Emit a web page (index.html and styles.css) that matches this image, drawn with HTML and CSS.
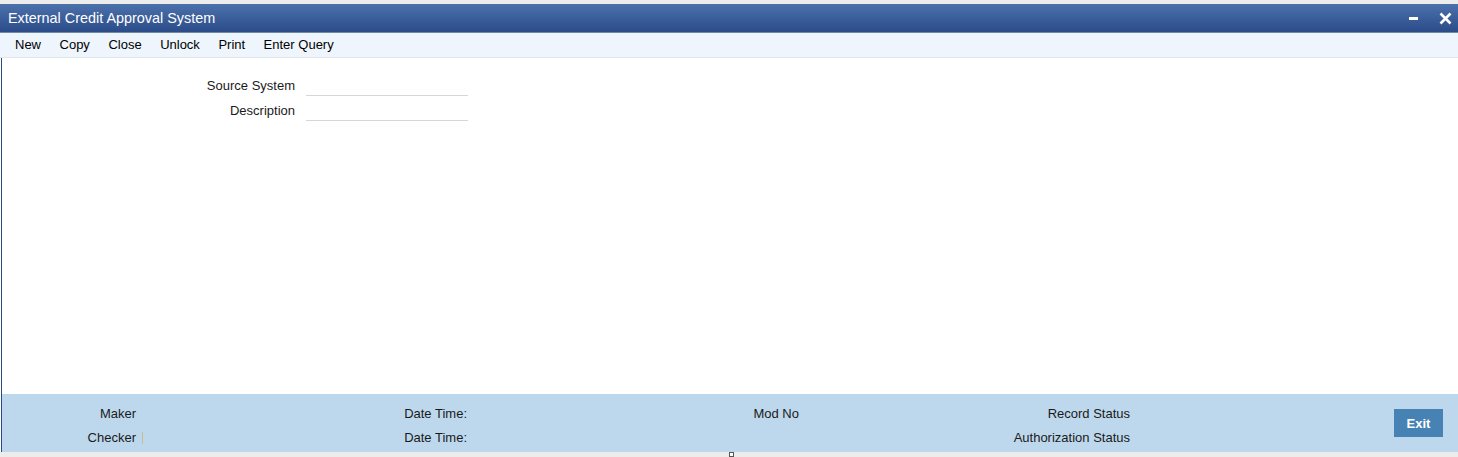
FILE: index.html
```html
<!DOCTYPE html>
<html>
<head>
<meta charset="utf-8">
<title>External Credit Approval System</title>
<link rel="stylesheet" href="styles.css">
</head>
<body>
<div class="window">
  <div class="titlebar">
    <span class="title">External Credit Approval System</span>
    <div class="controls">
      <span class="minimize"></span>
      <svg class="close" width="13" height="13" viewBox="0 0 13 13"><path d="M1.5 1.5 L11.5 11.5 M11.5 1.5 L1.5 11.5" stroke="#fff" stroke-width="2.6" fill="none"/></svg>
    </div>
  </div>
  <div class="toolbar">
    <span class="tool">New</span>
    <span class="tool">Copy</span>
    <span class="tool">Close</span>
    <span class="tool">Unlock</span>
    <span class="tool">Print</span>
    <span class="tool">Enter Query</span>
  </div>
  <div class="main">
    <div class="form">
      <label class="flabel">Source System</label>
      <div class="finput"></div>
      <label class="flabel">Description</label>
      <div class="finput"></div>
    </div>
  </div>
  <div class="footer">
    <div class="flab c1 r1">Maker</div>
    <div class="flab c2 r1">Date Time:</div>
    <div class="flab c3 r1">Mod No</div>
    <div class="flab c4 r1">Record Status</div>
    <div class="flab c1 r2">Checker</div>
    <div class="flab c2 r2 split"><span class="caret"></span><span>Date Time:</span></div>
    <div class="flab c4 r2">Authorization Status</div>
    <div class="exitcell"><button class="exit">Exit</button></div>
  </div>
  <div class="bottom"><span class="handle"></span></div>
</div>
</body>
</html>
```
FILE: styles.css
```css
html, body {
  margin: 0;
  padding: 0;
}
body {
  background: #ececec;
  font-family: "Liberation Sans", Arial, sans-serif;
  width: 1458px;
  height: 457px;
  overflow: hidden;
}
.window {
  padding-top: 4px;
}
.titlebar {
  height: 28px;
  background: linear-gradient(#4b71ab, #2b4c89);
  border-bottom: 1px solid #6d8b9c;
  display: flex;
  align-items: center;
  justify-content: space-between;
  color: #fff;
}
.title {
  font-size: 14.4px;
  padding-left: 8px;
  padding-bottom: 1px;
}
.controls {
  display: flex;
  align-items: center;
  gap: 21px;
  padding-right: 6px;
}
.minimize {
  display: block;
  width: 9px;
  height: 3px;
  background: #fff;
  margin-top: 1px;
}
.close {
  display: block;
}
.toolbar {
  height: 25px;
  box-sizing: border-box;
  background: #eef5fd;
  border-bottom: 1px solid #e1e4e8;
  display: flex;
  align-items: center;
  gap: 18.5px;
  padding-left: 15px;
  padding-bottom: 1px;
  font-size: 13px;
  color: #000;
}
.main {
  height: 336px;
  background: #fff;
  border-left: 1px solid #2a4886;
  margin-left: 1px;
  box-sizing: border-box;
  padding-top: 15px;
  box-shadow: -1px 0 0 #fff;
}
.form {
  display: grid;
  grid-template-columns: 293px 162px;
  grid-auto-rows: 25px;
  column-gap: 11px;
  font-size: 13px;
  color: #1a1a1a;
}
.flabel {
  text-align: right;
  line-height: 25px;
}
.finput {
  height: 23px;
  box-sizing: border-box;
  border-bottom: 1px solid #d6d6d6;
}
.footer {
  height: 58px;
  box-sizing: border-box;
  background: #bdd8ed;
  border-left: 1px solid #2a4886;
  margin-left: 1px;
  box-shadow: -1px 0 0 #fff;
  padding-top: 8px;
  display: grid;
  grid-template-columns: 134px 331px 332px 331px 1fr;
  grid-template-rows: 24px 24px;
  font-size: 13px;
  color: #1a1a1a;
}
.flab {
  text-align: right;
  line-height: 24px;
}
.c1 { grid-column: 1; }
.c2 { grid-column: 2; }
.c3 { grid-column: 3; }
.c4 { grid-column: 4; }
.r1 { grid-row: 1; }
.r2 { grid-row: 2; }
.split {
  display: flex;
  justify-content: space-between;
  align-items: center;
}
.caret {
  display: block;
  width: 1px;
  height: 12px;
  background: #cbbd8c;
  margin-left: 6px;
}
.exitcell {
  grid-column: 5;
  grid-row: 1 / span 2;
  display: flex;
  justify-content: flex-end;
  align-items: flex-start;
  padding-right: 15px;
  padding-top: 7px;
}
.exit {
  width: 49px;
  height: 28px;
  background: #4682b4;
  color: #fff;
  border: none;
  padding: 0;
  font-family: "Liberation Sans", Arial, sans-serif;
  font-size: 13px;
  font-weight: bold;
}
.bottom {
  height: 6px;
  padding-left: 729px;
  display: flex;
  align-items: flex-start;
}
.handle {
  display: block;
  width: 5px;
  height: 5px;
  box-sizing: border-box;
  border: 1px solid #555;
  background: #fff;
}
```
